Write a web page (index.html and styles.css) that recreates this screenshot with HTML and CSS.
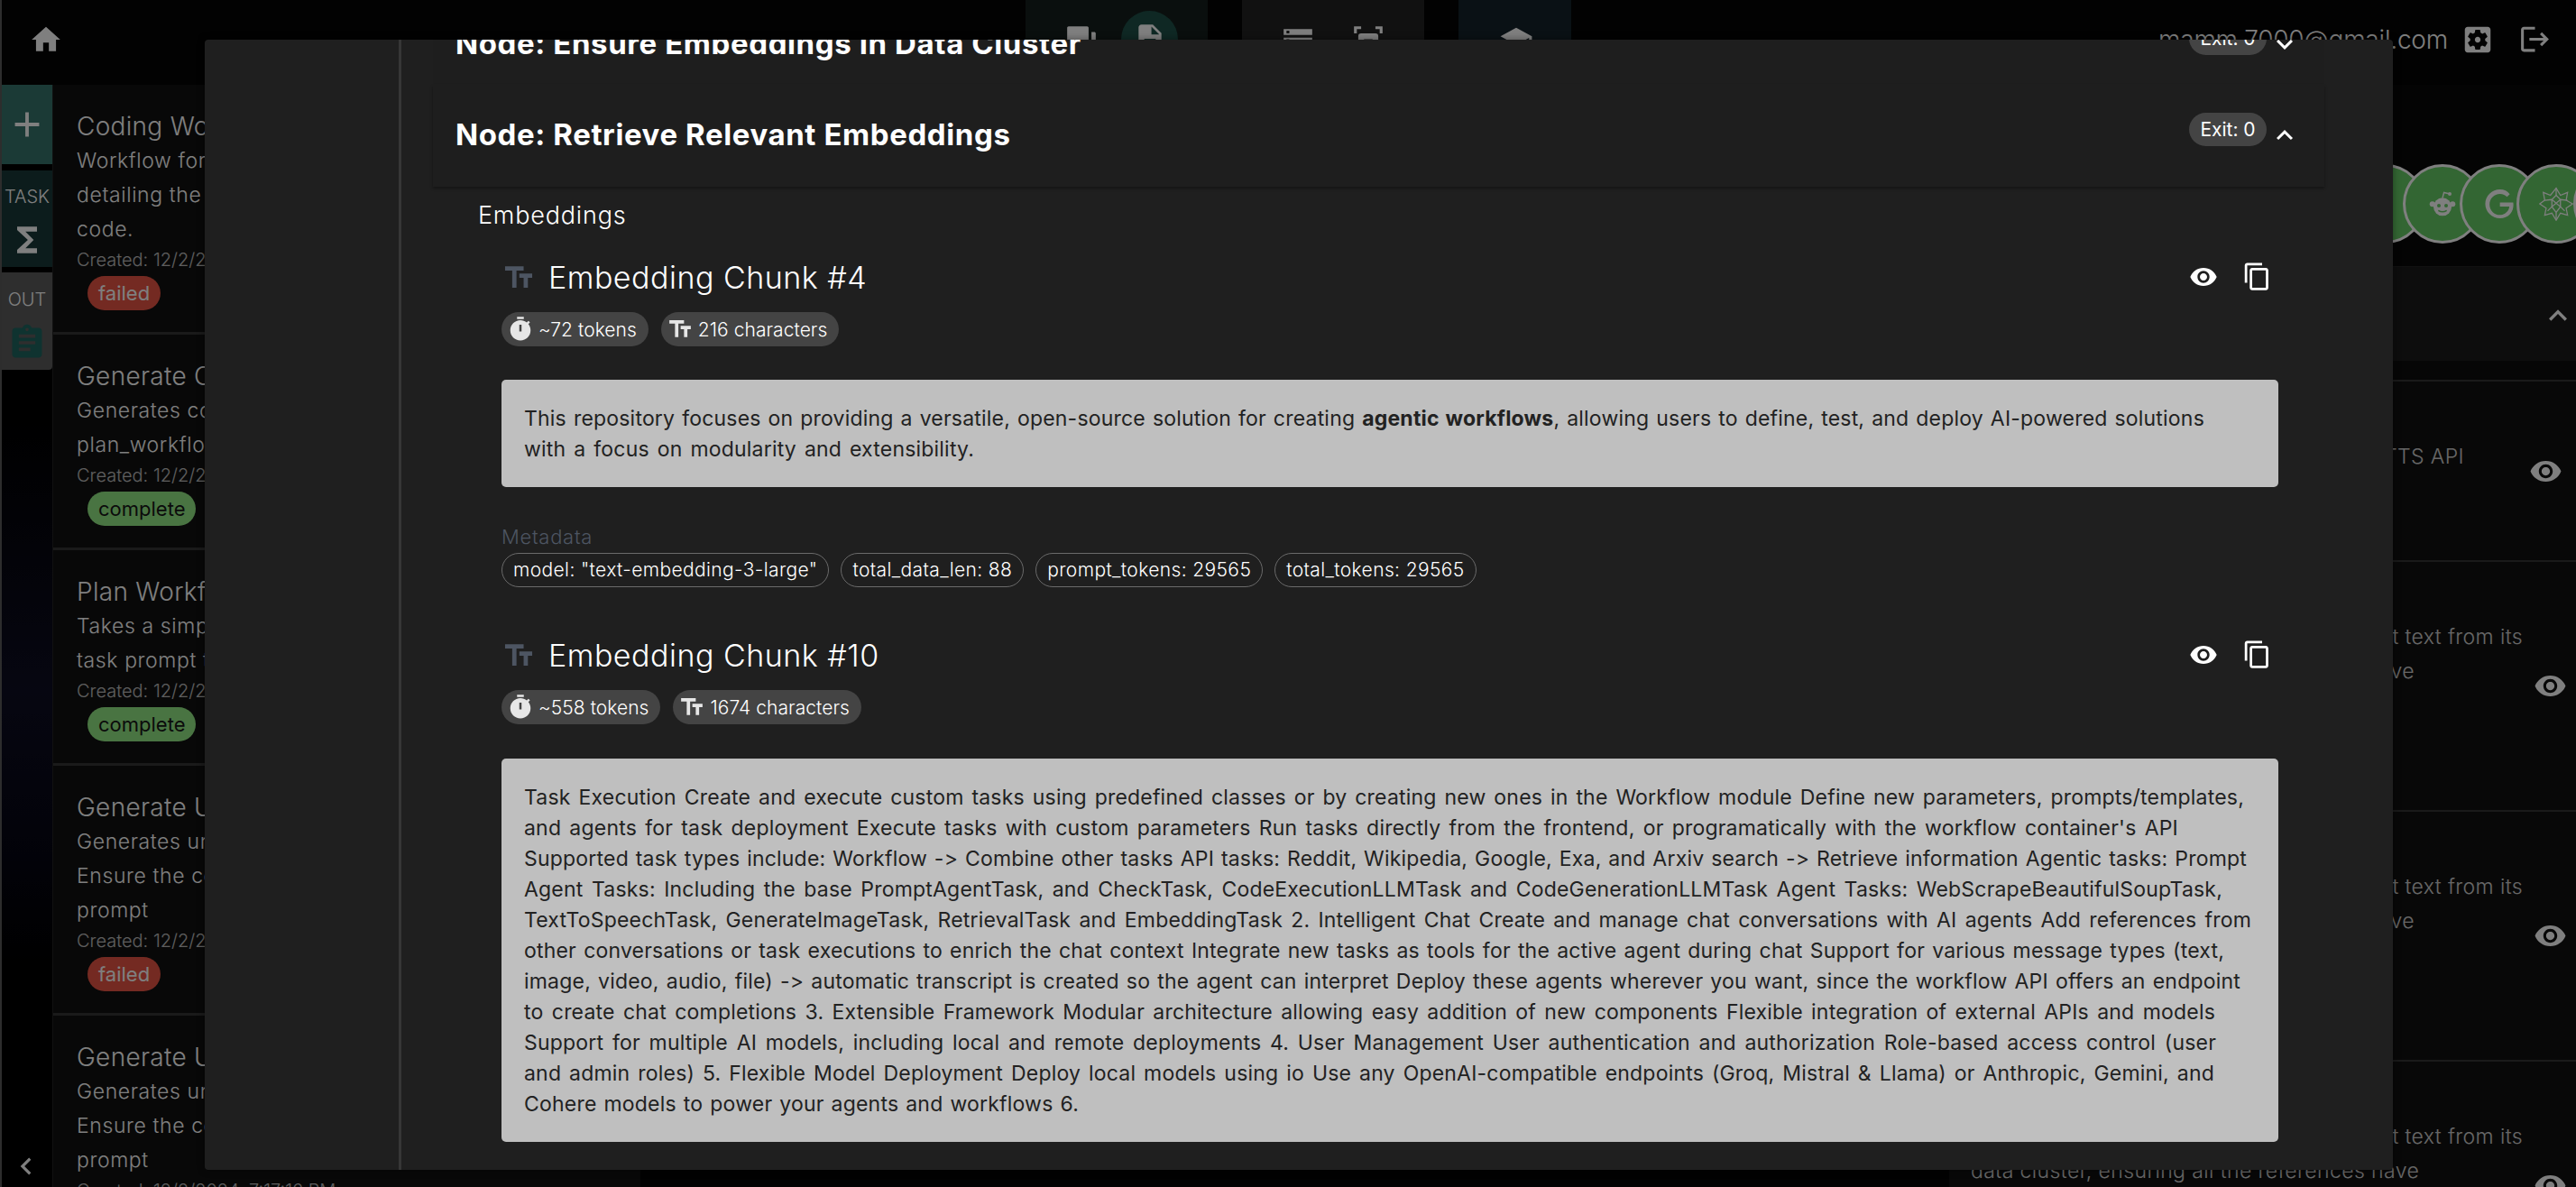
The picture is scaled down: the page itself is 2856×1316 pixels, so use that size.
FILE: index.html
```html
<!DOCTYPE html>
<html lang="en">
<head>
<meta charset="utf-8">
<title>Task Results</title>
<link rel="stylesheet" href="styles.css">
</head>
<body>
<svg class="defs" aria-hidden="true">
  <symbol id="i-eye" viewBox="0 0 24 24"><path d="M12 4.5C7 4.5 2.73 7.61 1 12c1.73 4.39 6 7.5 11 7.5s9.27-3.11 11-7.5c-1.73-4.39-6-7.5-11-7.5zM12 17c-2.76 0-5-2.24-5-5s2.24-5 5-5 5 2.24 5 5-2.24 5-5 5zm0-8c-1.66 0-3 1.34-3 3s1.34 3 3 3 3-1.34 3-3-1.34-3-3-3z"/></symbol>
  <symbol id="i-copy" viewBox="0 0 24 24"><path d="M16 1H4c-1.1 0-2 .9-2 2v14h2V3h12V1zm3 4H8c-1.1 0-2 .9-2 2v14c0 1.1.9 2 2 2h11c1.1 0 2-.9 2-2V7c0-1.1-.9-2-2-2zm0 16H8V7h11v14z"/></symbol>
  <symbol id="i-up" viewBox="0 0 24 24"><path d="M12 8l-6 6 1.41 1.41L12 10.83l4.59 4.58L18 14z"/></symbol>
  <symbol id="i-down" viewBox="0 0 24 24"><path d="M16.59 8.59L12 13.17 7.41 8.59 6 10l6 6 6-6z"/></symbol>
  <symbol id="i-tt" viewBox="0 0 24 24"><path d="M2.5 4v3h5v12h3V7h5V4h-13zm19 5h-9v3h3v7h3v-7h3V9z"/></symbol>
  <symbol id="i-timer" viewBox="0 0 24 24"><path fill-rule="evenodd" d="M15 1H9v2h6V1zm4.03 6.39l1.42-1.42c-.43-.51-.9-.99-1.41-1.41l-1.42 1.42C16.07 4.74 14.12 4 12 4c-4.97 0-9 4.03-9 9s4.02 9 9 9 9-4.03 9-9c0-2.12-.74-4.07-1.97-5.61zM13 14h-2V8h2v6z"/></symbol>
</svg>

<div class="page">
  <header class="topbar">
    <svg class="home" viewBox="0 0 24 24"><path d="M10 20v-6h4v6h5v-8h3L12 3 2 12h3v8z"/></svg>
    <nav class="nav">
      <div class="nav-group nav-a">
        <svg class="nav-icon" viewBox="0 0 24 24"><path d="M21 6h-2v9H6v2c0 .55.45 1 1 1h11l4 4V7c0-.55-.45-1-1-1zm-4 6V3c0-.55-.45-1-1-1H3c-.55 0-1 .45-1 1v14l4-4h10c.55 0 1-.45 1-1z"/></svg>
        <span class="nav-active"><svg class="nav-icon" viewBox="0 0 24 24"><path d="M14 2H6c-1.1 0-2 .9-2 2v16c0 1.1.9 2 2 2h12c1.1 0 2-.9 2-2V8l-6-6zm2 16H8v-2h8v2zm0-4H8v-2h8v2zm-3-5V3.5L18.5 9H13z"/></svg></span>
      </div>
      <div class="nav-group nav-b">
        <svg class="nav-icon" viewBox="0 0 24 24"><path d="M2 20h20v-4H2v4zm2-3h2v2H4v-2zM2 4v4h20V4H2zm4 3H4V5h2v2zm-4 7h20v-4H2v4zm2-3h2v2H4v-2z"/></svg>
        <svg class="nav-icon" viewBox="0 0 24 24"><path d="M2 2h5v2H4v3H2zM22 2h-5v2h3v3h2zM7 7h10a2 2 0 0 1 2 2v10a2 2 0 0 1-2 2H7a2 2 0 0 1-2-2V9a2 2 0 0 1 2-2zm2 4v3h6v-3z"/></svg>
      </div>
      <div class="nav-group nav-c">
        <svg class="nav-icon" viewBox="0 0 24 24"><path d="M5 13.18v4L12 21l7-3.82v-4L12 17l-7-3.82zM12 3L1 9l11 6 9-4.91V17h2V9L12 3z"/></svg>
      </div>
    </nav>
    <span class="email">mamm.7000@gmail.com</span>
    <svg class="top-icon" viewBox="0 0 24 24"><path d="M12 10c-1.1 0-2 .9-2 2s.9 2 2 2 2-.9 2-2-.9-2-2-2zm7-7H5c-1.11 0-2 .9-2 2v14c0 1.1.89 2 2 2h14c1.11 0 2-.9 2-2V5c0-1.1-.89-2-2-2zm-1.75 9c0 .23-.02.46-.05.68l1.48 1.16c.13.11.17.3.08.45l-1.4 2.42c-.09.15-.27.21-.43.15l-1.74-.7c-.36.28-.76.51-1.18.69l-.26 1.85c-.03.17-.18.3-.35.3h-2.8c-.17 0-.32-.13-.35-.29l-.26-1.85c-.43-.18-.82-.41-1.18-.69l-1.74.7c-.16.06-.34 0-.43-.15l-1.4-2.42c-.09-.15-.05-.34.08-.45l1.48-1.16c-.03-.23-.05-.46-.05-.69 0-.23.02-.46.05-.68l-1.48-1.16c-.13-.11-.17-.3-.08-.45l1.4-2.42c.09-.15.27-.21.43-.15l1.74.7c.36-.28.76-.51 1.18-.69l.26-1.85c.03-.17.18-.3.35-.3h2.8c.17 0 .32.13.35.29l.26 1.85c.43.18.82.41 1.18.69l1.74-.7c.16-.06.34 0 .43.15l1.4 2.42c.09.15.05.34-.08.45l-1.48 1.16c.03.23.05.46.05.69z"/></svg>
    <svg class="top-icon logout" viewBox="0 0 24 24"><path d="M17 7l-1.41 1.41L18.17 11H8v2h10.17l-2.58 2.58L17 17l5-5zM4 5h8V3H4c-1.1 0-2 .9-2 2v14c0 1.1.9 2 2 2h8v-2H4V5z"/></svg>
  </header>

  <main class="workspace">
    <aside class="rail">
      <div class="tab tab-add"><svg class="tab-icon" viewBox="0 0 24 24"><path d="M19 13h-6v6h-2v-6H5v-2h6V5h2v6h6v2z"/></svg></div>
      <div class="tab tab-task"><span class="tab-label">TASK</span><svg class="tab-icon" viewBox="0 0 24 24"><path d="M18 4H6v2l6.5 6L6 18v2h12v-3h-7l5-5-5-5h7z"/></svg></div>
      <div class="tab tab-out"><span class="tab-label">OUT</span><svg class="tab-icon clip" viewBox="0 0 24 24"><path d="M19 3h-4.18C14.4 1.84 13.3 1 12 1c-1.3 0-2.4.84-2.82 2H5c-1.1 0-2 .9-2 2v14c0 1.1.9 2 2 2h14c1.1 0 2-.9 2-2V5c0-1.1-.9-2-2-2zm-7 0c.55 0 1 .45 1 1s-.45 1-1 1-1-.45-1-1 .45-1 1-1zm2 14H7v-2h7v2zm3-4H7v-2h10v2zm0-4H7V7h10v2z"/></svg></div>
      <svg class="rail-back" viewBox="0 0 24 24"><path d="M15.41 7.41L14 6l-6 6 6 6 1.41-1.41L10.83 12z"/></svg>
    </aside>

    <section class="tasks">
      <article class="task">
        <h3 class="task-title">Coding Workflow</h3>
        <p class="task-line">Workflow for generating code,</p>
        <p class="task-line">detailing the steps to write</p>
        <p class="task-line">code.</p>
        <p class="task-date">Created: 12/2/2024, 7:17:16 PM</p>
        <span class="chip chip-failed">failed</span>
      </article>
      <article class="task">
        <h3 class="task-title">Generate Code</h3>
        <p class="task-line">Generates code from the</p>
        <p class="task-line">plan_workflow output</p>
        <p class="task-date">Created: 12/2/2024, 7:17:16 PM</p>
        <span class="chip chip-complete">complete</span>
      </article>
      <article class="task">
        <h3 class="task-title">Plan Workflow</h3>
        <p class="task-line">Takes a simple prompt and a</p>
        <p class="task-line">task prompt to plan the work</p>
        <p class="task-date">Created: 12/2/2024, 7:17:16 PM</p>
        <span class="chip chip-complete">complete</span>
      </article>
      <article class="task">
        <h3 class="task-title">Generate Unit Tests</h3>
        <p class="task-line">Generates unit tests for code.</p>
        <p class="task-line">Ensure the code meets the</p>
        <p class="task-line">prompt</p>
        <p class="task-date">Created: 12/2/2024, 7:17:16 PM</p>
        <span class="chip chip-failed">failed</span>
      </article>
      <article class="task">
        <h3 class="task-title">Generate Unit Tests</h3>
        <p class="task-line">Generates unit tests for code.</p>
        <p class="task-line">Ensure the code meets the</p>
        <p class="task-line">prompt</p>
        <p class="task-date">Created: 12/2/2024, 7:17:16 PM</p>
      </article>
    </section>

    <div class="center"></div>

    <aside class="side">
      <div class="logos">
        <span class="logo"></span>
        <span class="logo">
          <svg class="logo-svg" viewBox="0 0 24 24"><circle cx="12" cy="14.5" r="7.5" /><circle cx="3.6" cy="12.2" r="2.3"/><circle cx="20.4" cy="12.2" r="2.3"/><circle class="cut" cx="9" cy="13.5" r="1.5"/><circle class="cut" cx="15" cy="13.5" r="1.5"/><path class="cut-line" d="M8.5 17.5q3.5 2.2 7 0"/><path class="thin" d="M12 7l1.2-4.4 4 1"/><circle cx="18" cy="3.8" r="1.5"/></svg>
        </span>
        <span class="logo">
          <svg class="logo-svg" viewBox="0 0 24 24"><path d="M12.48 10.92v3.28h7.84c-.24 1.84-.853 3.187-1.787 4.133-1.147 1.147-2.933 2.933-6.053 2.933-4.827 0-8.6-3.893-8.6-8.72s3.773-8.72 8.6-8.72c2.6 0 4.507 1.027 5.907 2.347l2.307-2.307C18.747 1.44 16.133 0 12.48 0 5.867 0 .307 5.387.307 12s5.56 12 12.173 12c3.573 0 6.267-1.173 8.373-3.36 2.16-2.16 2.84-5.213 2.84-7.667 0-.76-.053-1.467-.173-2.053H12.48z"/></svg>
        </span>
        <span class="logo">
          <svg class="logo-svg wolfram" viewBox="0 0 24 24"><path d="M12 1l3 5 5-2-1 5.500 4.500 2.500-4.500 3 1 5-5-1.500-3 5-3-5-5 1.500 1-5-4.500-3L4 9.500 3 4l5 2z"/><path d="M12 6l3 3 0 5-3 4-3-4 0-5z"/><path d="M4 9.500L9 9M20 9.500L15 9M9 14l-3 3M15 14l3 3M12 1v5M12 18v5M9 9l6 5M15 9l-6 5"/></svg>
        </span>
        <span class="logo"></span>
      </div>
      <div class="side-head"><svg class="side-chev" viewBox="0 0 24 24"><use href="#i-up"/></svg></div>
      <div class="rows">
        <div class="row row-a">
          <p class="row-text"><span class="rl rl-a">Converts the given text to audio with the TTS API</span></p>
          <svg class="row-eye eye-a" viewBox="0 0 24 24"><use href="#i-eye"/></svg>
        </div>
        <div class="row row-b">
          <p class="row-text"><span class="rl rl-b">Takes a document and extract text from its</span><span class="rl rl-c">chunks and stores them for later retrieve</span></p>
          <svg class="row-eye" viewBox="0 0 24 24"><use href="#i-eye"/></svg>
        </div>
        <div class="row row-b">
          <p class="row-text"><span class="rl rl-b">Takes a document and extract text from its</span><span class="rl rl-c">chunks and stores them for later retrieve</span></p>
          <svg class="row-eye" viewBox="0 0 24 24"><use href="#i-eye"/></svg>
        </div>
        <div class="row row-b">
          <p class="row-text"><span class="rl rl-b">Takes a document and extract text from its</span><span class="rl rl-c">data cluster, ensuring all the references have</span></p>
          <svg class="row-eye" viewBox="0 0 24 24"><use href="#i-eye"/></svg>
        </div>
      </div>
    </aside>
  </main>
</div>

<div class="backdrop"></div>

<div class="modal">
  <div class="modal-side"></div>
  <div class="modal-body">
    <div class="node-head node-prev">
      <h2 class="node-title">Node: Ensure Embeddings In Data Cluster</h2>
      <span class="exit">Exit: 0</span>
      <svg class="chev" viewBox="0 0 24 24"><use href="#i-down"/></svg>
    </div>
    <div class="node-head node-open">
      <h2 class="node-title">Node: Retrieve Relevant Embeddings</h2>
      <span class="exit">Exit: 0</span>
      <svg class="chev" viewBox="0 0 24 24"><use href="#i-up"/></svg>
    </div>

    <div class="node-content">
      <h4 class="section-label">Embeddings</h4>

      <section class="chunk">
        <div class="chunk-head">
          <svg class="tt" viewBox="0 0 24 24"><use href="#i-tt"/></svg>
          <h3 class="chunk-title">Embedding Chunk #4</h3>
          <svg class="act act-eye" viewBox="0 0 24 24"><use href="#i-eye"/></svg>
          <svg class="act act-copy" viewBox="0 0 24 24"><use href="#i-copy"/></svg>
        </div>
        <div class="pills">
          <span class="pill"><svg class="pill-icon" viewBox="0 0 24 24"><use href="#i-timer"/></svg>~72 tokens</span>
          <span class="pill"><svg class="pill-icon" viewBox="0 0 24 24"><use href="#i-tt"/></svg>216 characters</span>
        </div>
        <div class="text-box">
          <span class="tl w-1863">This repository focuses on providing a versatile, open-source solution for creating <strong>agentic workflows</strong>, allowing users to define, test, and deploy AI-powered solutions</span>
          <span class="tl w-499">with a focus on modularity and extensibility.</span>
        </div>
        <h5 class="meta-label">Metadata</h5>
        <div class="meta-pills">
          <span class="meta-pill">model: "text-embedding-3-large"</span>
          <span class="meta-pill">total_data_len: 88</span>
          <span class="meta-pill">prompt_tokens: 29565</span>
          <span class="meta-pill">total_tokens: 29565</span>
        </div>
      </section>

      <section class="chunk chunk-next">
        <div class="chunk-head">
          <svg class="tt" viewBox="0 0 24 24"><use href="#i-tt"/></svg>
          <h3 class="chunk-title">Embedding Chunk #10</h3>
          <svg class="act act-eye" viewBox="0 0 24 24"><use href="#i-eye"/></svg>
          <svg class="act act-copy" viewBox="0 0 24 24"><use href="#i-copy"/></svg>
        </div>
        <div class="pills">
          <span class="pill"><svg class="pill-icon" viewBox="0 0 24 24"><use href="#i-timer"/></svg>~558 tokens</span>
          <span class="pill"><svg class="pill-icon" viewBox="0 0 24 24"><use href="#i-tt"/></svg>1674 characters</span>
        </div>
        <div class="text-box">
          <span class="tl w-1907">Task Execution Create and execute custom tasks using predefined classes or by creating new ones in the Workflow module Define new parameters, prompts/templates,</span>
          <span class="tl w-1834">and agents for task deployment Execute tasks with custom parameters Run tasks directly from the frontend, or programatically with the workflow container's API</span>
          <span class="tl w-1910">Supported task types include: Workflow -&gt; Combine other tasks API tasks: Reddit, Wikipedia, Google, Exa, and Arxiv search -&gt; Retrieve information Agentic tasks: Prompt</span>
          <span class="tl w-1883">Agent Tasks: Including the base PromptAgentTask, and CheckTask, CodeExecutionLLMTask and CodeGenerationLLMTask Agent Tasks: WebScrapeBeautifulSoupTask,</span>
          <span class="tl w-1915">TextToSpeechTask, GenerateImageTask, RetrievalTask and EmbeddingTask 2. Intelligent Chat Create and manage chat conversations with AI agents Add references from</span>
          <span class="tl w-1885">other conversations or task executions to enrich the chat context Integrate new tasks as tools for the active agent during chat Support for various message types (text,</span>
          <span class="tl w-1903">image, video, audio, file) -&gt; automatic transcript is created so the agent can interpret Deploy these agents wherever you want, since the workflow API offers an endpoint</span>
          <span class="tl w-1875">to create chat completions 3. Extensible Framework Modular architecture allowing easy addition of new components Flexible integration of external APIs and models</span>
          <span class="tl w-1876">Support for multiple AI models, including local and remote deployments 4. User Management User authentication and authorization Role-based access control (user</span>
          <span class="tl w-1874">and admin roles) 5. Flexible Model Deployment Deploy local models using io Use any OpenAI-compatible endpoints (Groq, Mistral &amp; Llama) or Anthropic, Gemini, and</span>
          <span class="tl w-615">Cohere models to power your agents and workflows 6.</span>
        </div>
      </section>
    </div>
  </div>
</div>
</body>
</html>
```
FILE: styles.css
```css
* { box-sizing: border-box; margin: 0; padding: 0; }
html, body { width: 2856px; height: 1316px; overflow: hidden; }
body { background: #040404; color: #fff; font-family: Inter, "Noto Sans", sans-serif; font-weight: 300; }
.defs { display: none; }
h2, h3, h4, h5 { font-weight: 300; }
svg { fill: currentColor; flex: none; display: block; }

.page { width: 2856px; height: 1316px; display: flex; flex-direction: column; border-left: 2px solid #5a5a5a; }

/* top bar */
.topbar { height: 94px; display: flex; align-items: flex-start; flex: none; }
.home { width: 38px; height: 38px; margin: 25px 0 0 30px; color: #fff; }
.nav { display: flex; gap: 38px; margin-left: 1067px; }
.nav-group { height: 90px; border-radius: 0 0 16px 16px; display: flex; align-items: flex-start; }
.nav-a { width: 202px; background: #141e1c; padding-left: 43px; gap: 25px; }
.nav-b { width: 202px; background: #222; padding-left: 43px; gap: 40px; }
.nav-c { width: 125px; background: #14222a; padding-left: 45px; }
.nav-icon { width: 38px; height: 38px; margin-top: 26px; }
.nav-active { width: 63px; height: 70px; margin-top: 12px; border-radius: 32px; background: #1e5048; display: flex; justify-content: center; }
.nav-active .nav-icon { margin-top: 12px; }
.email { margin-left: auto; font-size: 28px; line-height: 32px; margin-top: 28px; letter-spacing: -.2px; }
.top-icon { width: 38px; height: 38px; margin: 25px 0 0 14px; }
.logout { margin: 25px 27px 0 26px; width: 37px; height: 37px; }

.workspace { flex: 1; min-height: 0; display: flex; }

/* left rail */
.rail { width: 56px; flex: none; position: relative; display: flex; flex-direction: column; gap: 6px; background: linear-gradient(180deg, #000 30%, #0d0d22 55%, #050512 70%, #000 80%); }
.tab { display: flex; flex-direction: column; align-items: center; }
.tab-add { height: 88px; background: #36746c; justify-content: center; margin-bottom: 1px; }
.tab-task { height: 107px; background: #183838; padding-top: 15px; }
.tab-out { height: 108px; background: #5c5c5c; padding-top: 16px; border-radius: 0 0 4px 0; }
.tab-label { font-size: 20px; line-height: 28px; }
.tab-icon { width: 38px; height: 38px; margin-top: 4px; }
.tab-add .tab-icon { width: 46px; height: 46px; margin: 0; }
.tab-task .tab-icon { width: 44px; height: 44px; margin-top: 12px; }
.tab-out .clip { color: #1e6660; width: 44px; height: 44px; margin-top: 12px; }
.rail-back { position: absolute; left: 8px; bottom: 4px; width: 38px; height: 38px; }

/* task list */
.tasks { width: 652px; flex: none; overflow: hidden; background: #101010; border-left: 1px solid #222; }
.task { padding: 27px 0 24px 26px; border-bottom: 3px solid #343434; }
.task-title { font-size: 28px; line-height: 38px; font-weight: 300; white-space: nowrap; letter-spacing: .3px; }
.task-line { font-size: 23px; line-height: 38px; white-space: nowrap; letter-spacing: .6px; }
.task-date { font-size: 20px; line-height: 30px; opacity: .72; }
.chip { display: inline-block; margin: 3px 0 0 12px; height: 38px; line-height: 38px; padding: 0 12px; border-radius: 19px; font-size: 22px; font-weight: 400; }
.chip-failed { background: #e85544; color: #fff; }
.chip-complete { background: #92e884; color: #161616; }

.center { flex: 1; }

/* right panel */
.side { width: 695px; flex: none; overflow: hidden; display: flex; flex-direction: column; background: #0c0c0c; }
.logos { height: 201px; flex: none; display: flex; padding: 88px 0 0 14px; background: #080808; }
.logo { width: 88px; height: 88px; flex: none; border-radius: 50%; background: #66cc66; border: 3px solid #fff; margin-right: -25px; display: flex; align-items: center; justify-content: center; }
.logo:nth-child(1) { margin-left: 426px; }
.logo-svg { width: 32px; height: 32px; color: #fff; }
.logo-svg .cut { fill: #66cc66; }
.logo-svg .cut-line { fill: none; stroke: #66cc66; stroke-width: 1.2; }
.logo-svg .thin { fill: none; stroke: #fff; stroke-width: 1.1; }
.wolfram { fill: none; stroke: #fff; stroke-width: .8; width: 38px; height: 38px; }
.side-head { height: 105px; flex: none; background: #1a1a1a; position: relative; border-top: 1px solid #222; }
.side-chev { position: absolute; right: 0; top: 34px; width: 40px; height: 40px; }
.rows { border-top: 21px solid #0c0c0c; }
.row { display: flex; align-items: center; background: #101010; border-top: 2px solid #343434; position: relative; }
.row-a { height: 200px; }
.row-b { height: 277px; }
.row-text { width: 612px; margin-left: 24px; align-self: flex-start; padding-top: 64px; font-size: 23px; line-height: 38px; }
.rl { display: block; white-space: nowrap; text-align: right; opacity: .8; letter-spacing: .4px; }
.rl-a { width: 547px; }
.rl-b { width: 612px; }
.rl-c { width: 492px; }
.row-eye { width: 37px; height: 37px; position: absolute; left: 648px; }
.row .eye-a { left: 643px; }

.backdrop { position: absolute; inset: 0; background: rgba(0,0,0,.5); }

/* modal */
.modal { position: absolute; left: 227px; top: 44px; width: 2426px; height: 1253px; background: #1f1f1f; border-radius: 4px; overflow: hidden; display: flex; box-shadow: 0 0 8px rgba(0,0,0,.4); }
.modal-side { flex: none; border-right: 3px solid #363636; width: 218px; }
.modal-body { flex: 1; min-width: 0; padding: 0 76px 0 35px; margin-top: -64px; overflow: visible; }

.node-head { height: 113px; display: flex; align-items: flex-start; padding-left: 25px; padding-right: 26px; background: #1e1e1e; }
.node-prev { padding-top: 44px; margin-bottom: 1px; }
.node-open { padding-top: 31px; box-shadow: 0 2px 3px rgba(0,0,0,.35); position: relative; }
.node-title { font-size: 33px; font-weight: 700; line-height: 37px; margin-top: 6px; margin-right: auto; white-space: nowrap; letter-spacing: .6px; }
.exit { width: 86px; height: 37px; border-radius: 19px; background: #444; font-size: 21px; line-height: 37px; text-align: center; font-weight: 400; }
.chev { width: 36px; height: 36px; margin: 7px 0 0 2px; }

.node-content { padding: 17px 0 0 50px; }
.section-label { font-size: 27px; line-height: 30px; letter-spacing: .8px; font-weight: 300; }

.chunk { padding: 34px 51px 0 27px; margin-left: -1px; }
.chunk-next { padding-top: 56px; }
.chunk-head { display: flex; align-items: center; height: 40px; }
.tt { width: 38px; height: 38px; color: #4d5562; }
.chunk-title { font-size: 34px; line-height: 40px; margin-left: 14px; margin-right: auto; font-weight: 300; letter-spacing: .5px; }
.act { margin-top: -3px; }
.act-eye { width: 32px; height: 32px; margin-right: 27px; }
.act-copy { width: 33px; height: 33px; margin-right: 7px; }

.pills { display: flex; gap: 14px; margin-top: 18px; }
.pill { height: 38px; border-radius: 19px; background: #444; display: flex; align-items: center; padding: 0 13px 0 6px; font-size: 21px; font-weight: 300; gap: 5px; white-space: nowrap; letter-spacing: .05px; }
.pill-icon { width: 30px; height: 30px; color: #e6e6e6; }

.text-box { margin-top: 37px; background: #bfbfbf; color: #222; border-radius: 5px; padding: 26px 26px 25px 25px; }
.tl { display: block; font-size: 23px; line-height: 34px; font-weight: 400; letter-spacing: .2px; text-align: justify; text-align-last: justify; }
.tl strong { font-weight: 700; }
.chunk-next .text-box { margin-top: 38px; }
.w-1863 { width: 1863px; }
.w-499 { width: 499px; }
.w-1907 { width: 1907px; }
.w-1834 { width: 1834px; }
.w-1910 { width: 1910px; }
.w-1883 { width: 1883px; }
.w-1915 { width: 1915px; }
.w-1885 { width: 1885px; }
.w-1903 { width: 1903px; }
.w-1875 { width: 1875px; }
.w-1876 { width: 1876px; }
.w-1874 { width: 1874px; }
.w-615 { width: 615px; }

.meta-label { margin-top: 40px; font-size: 22px; line-height: 30px; color: #4d5562; font-weight: 300; letter-spacing: .7px; }
.meta-pills { display: flex; gap: 13px; margin-top: 3px; }
.meta-pill { height: 38px; border-radius: 19px; border: 1px solid #6a6a6a; line-height: 36px; padding: 0 12px; font-size: 21px; white-space: nowrap; letter-spacing: .38px; }
```
